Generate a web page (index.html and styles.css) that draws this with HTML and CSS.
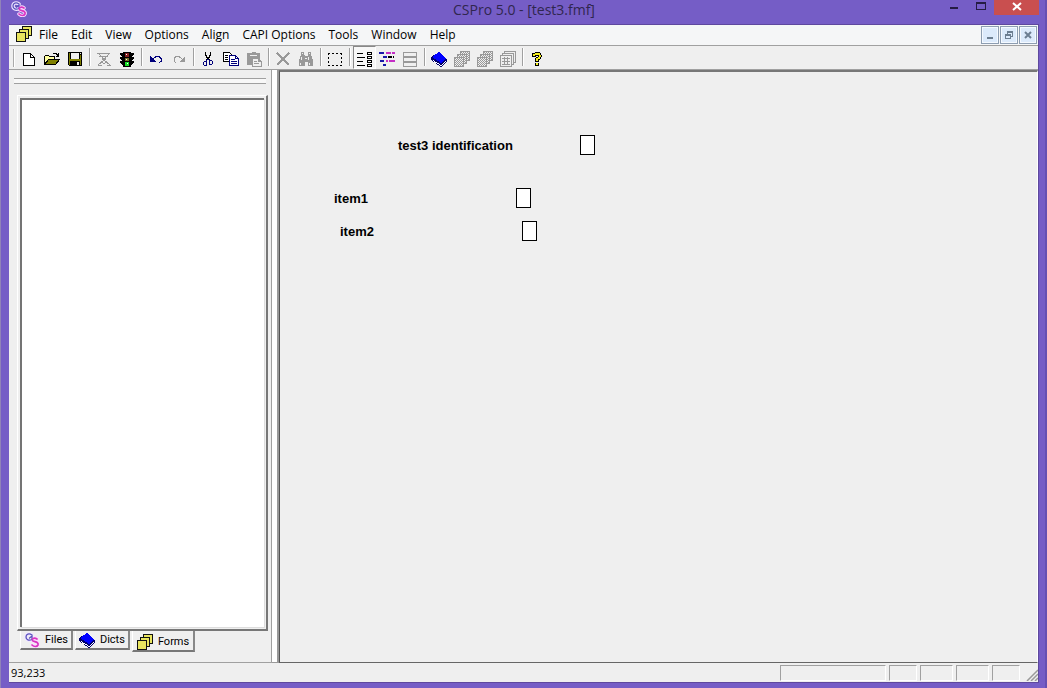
FILE: index.html
```html
<!DOCTYPE html>
<html lang="en">
<head>
<meta charset="utf-8">
<title>CSPro 5.0 - [test3.fmf]</title>
<link rel="stylesheet" href="styles.css">
</head>
<body>
<svg class="defs" aria-hidden="true">
  <defs>
    <pattern id="dots" width="2" height="2" patternUnits="userSpaceOnUse"><path fill="#efefef" d="M0 0h2v2H0z"/><path fill="#999" d="M0 0h1v1H0zM1 1h1v1H1z"/></pattern>
    <symbol id="logo" viewBox="0 0 16 16"><g fill="none" stroke-linecap="round" shape-rendering="geometricPrecision"><path d="M8 3C5 1 2 2 2 5s3 4 6 2.500" stroke="#f0e6ff" stroke-width="3.500"/><path d="M13 7c-3-2-6 0-4 2 2 1 6 1 5 4-1 2-4 2-6 0" stroke="#fbdcff" stroke-width="3.500"/><path d="M8 3C5 1 2 2 2 5s3 4 6 2.500V4L5.500 6" stroke="#5952bd" stroke-width="1.300"/><path d="M13 7c-3-2-6 0-4 2 2 1 6 1 5 4-1 2-4 2-6 0" stroke="#d935c2" stroke-width="1.700"/></g></symbol>
    <symbol id="forms" viewBox="0 0 16 16"><g fill="#e9e55f" stroke="#111"><path d="M6.500.5h9v9h-9zM3.500 3.500h9v9h-9zM.5 6.500h9v9h-9z"/></g></symbol>
    <symbol id="stack" viewBox="0 0 16 16"><g fill="url(#dots)" stroke="#999"><path d="M6.500.5h9v9h-9z"/><path d="M3.500 3.500h9v9h-9z"/><path d="M.5 6.500h9v9h-9z"/></g></symbol>
    <symbol id="book" viewBox="0 0 16 16"><path fill="#00006b" d="M0 6 8 1l8 7v3l-6 5-10-7z"/><path fill="#fff" d="m2 9 8 5 5-5v2l-5 4-8-5z"/><path fill="#00f" d="M1 6 8 1l7 7-5 4z"/></symbol>
  </defs>
</svg>
<div class="window">
  <header class="titlebar">
    <svg class="app-icon"><use href="#logo"/></svg>
    <h1 class="title">CSPro 5.0 - [test3.fmf]</h1>
    <div class="caption-buttons">
      <button class="caption" aria-label="Minimize"><svg viewBox="0 0 10 10"><path fill="#251c43" d="M1 6h8v2H1z"/></svg></button>
      <button class="caption" aria-label="Maximize"><svg viewBox="0 0 10 10"><path fill="#251c43" fill-rule="evenodd" d="M0 1h10v8H0zM1 3h8v5H1z"/></svg></button>
      <button class="caption caption-close" aria-label="Close"><svg viewBox="0 0 10 10"><path stroke="#fff" stroke-width="2" d="m1 2 8 7M9 2 1 9"/></svg></button>
    </div>
  </header>
  <div class="client">
    <nav class="menubar">
      <svg class="icon doc-icon" viewBox="0 0 16 16"><g fill="#e9e55f" stroke="#111"><path d="M6.500.5h9v9h-9z"/><path d="M3.500 3.500h9v9h-9z"/><path d="M.5 6.500h9v9h-9z"/></g></svg>
      <button class="menu">File</button><button class="menu">Edit</button><button class="menu">View</button><button class="menu">Options</button><button class="menu">Align</button><button class="menu">CAPI Options</button><button class="menu">Tools</button><button class="menu">Window</button><button class="menu">Help</button>
      <div class="mdi-buttons">
        <button class="mdi" aria-label="Minimize form"><svg viewBox="0 0 8 8"><path fill="#6d7f92" d="M1 6h6v2H1z"/></svg></button>
        <button class="mdi" aria-label="Restore form"><svg viewBox="0 0 8 8"><path fill="#6d7f92" fill-rule="evenodd" d="M2 0h6v6H6v2H0V3h2zM3 2v1h3v2h1V2zM1 5v2h4V5z"/></svg></button>
        <button class="mdi" aria-label="Close form"><svg viewBox="0 0 8 8"><path stroke="#6d7f92" stroke-width="2" d="m1 1 6 6M7 1 1 7"/></svg></button>
      </div>
    </nav>
    <div class="toolbar" role="toolbar" aria-label="Standard">
      <span class="handle"></span>
      <button class="tool" aria-label="New"><svg class="icon" viewBox="0 0 16 16"><path fill="#fff" stroke="#000" d="M2.500 2.500h7l4 4v8h-11z"/><path fill="none" stroke="#000" d="M9.500 2.500v4h4"/></svg></button>
      <button class="tool" aria-label="Open"><svg class="icon" viewBox="0 0 16 16"><path fill="#ffffa0" stroke="#000" d="M.5 13.500v-8l1-1h3l1 1h5v3h-6z"/><path fill="#808000" stroke="#000" d="m.5 13.500 4-5h11l-4 5z"/><path fill="none" stroke="#000" d="M9 2.500h3l2 2M14.500 2v3h-3"/></svg></button>
      <button class="tool" aria-label="Save"><svg class="icon" viewBox="0 0 16 16"><path d="M1 1h14v14H2l-1-1z"/><path fill="#808000" d="M2 2h1v12H2zM13 4h1v10h-1zM3 8h10v2H3z"/><path fill="#efefef" d="M4 2h8v6H4zM13 2h1v1h-1zM10 11h2v3h-2z"/></svg></button>
      <span class="sep"></span>
      <button class="tool" aria-label="Compile" disabled><svg class="icon" viewBox="0 0 16 16"><g fill="none" stroke="#999"><path d="M1 2.500h13M3 5.500h9M3 3l4 4M13 3 9 7M6 7h4L8 10zM8 9l-6 5M8 9l6 5M2 14.500h4M11 14.500h4M5 10l2 2h2l2-2"/></g></svg></button>
      <button class="tool" aria-label="Run"><svg class="icon" viewBox="0 0 16 16"><path d="M4 1h8v1h3v2l-3 2h3v2l-3 2h3v2l-3 2v2H4v-2l-3-2v-2h3L1 8V6h3L1 4V2h3z"/><path fill="#842020" d="M6 2h4v4H6z"/><path fill="#77702b" d="M6 7h4v3H6z"/><path fill="#19df29" d="M6 11h4v4H6z"/><path fill="#fff" d="M7 3h1v1H7zM7 8h1v1H7zM8 12h1v1H8z"/></svg></button>
      <span class="sep"></span>
      <button class="tool" aria-label="Undo"><svg class="icon" viewBox="0 0 16 16"><path fill="#00007b" d="M2 5v6h6z"/><path fill="none" stroke="#00007b" d="M4.500 8.500 8 5.500h3l2 2v3l-2 1"/></svg></button>
      <button class="tool" aria-label="Redo" disabled><svg class="icon" viewBox="0 0 16 16"><path fill="#999" d="M14 5v6H8z"/><path fill="none" stroke="#999" d="M11.500 8.500 8 5.500H5l-2 2v3l2 1"/></svg></button>
      <span class="sep"></span>
      <button class="tool" aria-label="Cut"><svg class="icon" viewBox="0 0 16 16"><path fill="none" stroke="#000" stroke-width="1.500" d="M5.500 1v3L9 9M10.500 1v3L7 9"/><path fill="none" stroke="#00007b" d="m8 8-2 2M8 8l2 2M4.500 10.500h2v4h-2l-1-1v-2zM9.500 9.500h2l1 1v2l-1 1h-2z"/></svg></button>
      <button class="tool" aria-label="Copy"><svg class="icon" viewBox="0 0 16 16"><path fill="#fff" stroke="#000" d="M.5 1.500h6l2 2v7h-8z"/><path stroke="#000" d="M2 4.500h3M2 6.500h3M2 8.500h3"/><path fill="#fff" stroke="#00007b" d="M6.500 4.500h6l3 3v7h-9z"/><path stroke="#00007b" fill="none" d="M8 8.500h4M8 10.500h6M8 12.500h6M12.500 5v2.500H15"/></svg></button>
      <button class="tool" aria-label="Paste" disabled><svg class="icon" viewBox="0 0 16 16"><path fill="#999" d="M1 2h4l1-1h3l1 1h4v12H1z"/><path fill="#efefef" stroke="#999" d="M6.500 7.500h6l3 3v5h-9zM12.500 8v2.500H15"/><path stroke="#999" d="M8 10.500h3M8 12.500h5"/><path stroke="#efefef" d="M4 4.500h7"/></svg></button>
      <span class="sep"></span>
      <button class="tool" aria-label="Delete" disabled><svg class="icon" viewBox="0 0 16 16"><path stroke="#999" stroke-width="2" d="m2 2 12 12M14 2 2 14"/></svg></button>
      <button class="tool" aria-label="Find" disabled><svg class="icon" viewBox="0 0 16 16"><path fill="#999" d="M3 1h3v3l1 1h2l1-1V1h3v3l1 2 1 4v5h-5v-4H7v4H1v-5l1-4 1-2z"/><path fill="#efefef" d="M4 2h1v1H4zM11 2h1v1h-1zM3 6h1v3H3zM7 7h2v1H7zM10 6h1v3h-1zM2 12h1v2H2zM11 12h1v2h-1z"/></svg></button>
      <span class="sep"></span>
      <button class="tool" aria-label="Select area"><svg class="icon" viewBox="0 0 16 16"><path fill="none" stroke="#000" stroke-dasharray="2 2" d="M1 2.500h14M1 14.500h14M1.500 2v13M14.500 2v13"/></svg></button>
      <span class="sep"></span>
      <button class="tool tool-pressed" aria-label="Form layout" aria-pressed="true"><svg class="icon" viewBox="0 0 16 16"><path fill="none" stroke="#000" d="M1 2.500h6M1 6.500h8M1 10.500h6M1 14.500h8M11.500 1.500h4v2h-4zM11.500 5.500h4v2h-4zM11.500 9.500h4v2h-4zM11.500 13.500h4v2h-4z"/></svg></button>
      <button class="tool" aria-label="Question text"><svg class="icon" viewBox="0 0 16 16"><path fill="#1717a8" d="M0 1h5v2H0zM4 5h4v2H4zM1 9h4v2H1zM4 13h3v2H4z"/><path fill="#c32dc5" d="M7 1h5v2H7zM13 1h3v2h-3zM7 9h2v2H7zM10 9h6v2h-6z"/><path d="M9 5h4v2H9zM14 5h1v2h-1z"/></svg></button>
      <button class="tool" aria-label="Rows" disabled><svg class="icon" viewBox="0 0 16 16"><path fill="none" stroke="#999" d="M1.500 1.500h13v14h-13zM1 5.500h14M1 6.500h14M1 10.500h14M1 11.500h14"/></svg></button>
      <span class="sep"></span>
      <button class="tool" aria-label="Dictionary"><svg class="icon"><use href="#book"/></svg></button>
      <button class="tool" aria-label="Add form" disabled><svg class="icon"><use href="#stack"/></svg></button>
      <button class="tool" aria-label="Add level" disabled><svg class="icon"><use href="#stack"/></svg></button>
      <button class="tool" aria-label="Add roster" disabled><svg class="icon" viewBox="0 0 16 16"><g fill="#efefef" stroke="#999"><path d="M4.500.5h11v11h-11z"/><path d="M2.500 2.500h11v11h-11z"/><path d="M.5 4.500h11v11H.5zM2 7.500h8M2 10.500h8M2 13.500h8M4.500 6v8M7.500 6v8"/></g></svg></button>
      <span class="sep"></span>
      <button class="tool" aria-label="Help"><svg class="icon" viewBox="0 0 16 16"><path fill="none" stroke="#000" stroke-width="4" d="M5 6V4l2-1h3l1 2-1 2-2 1v3M8 12v3"/><path fill="none" stroke="#f4ee20" stroke-width="2" d="M5 5V4l2-1h3l1 2-1 2-2 1v2M8 12v2"/></svg></button>
    </div>
    <main class="workspace">
      <aside class="sidebar">
        <div class="gripper"></div>
        <section class="tree-frame"><div class="tree"></div></section>
        <div class="tabs" role="tablist">
          <button class="tab" role="tab"><svg class="icon"><use href="#logo"/></svg>Files</button>
          <button class="tab" role="tab"><svg class="icon"><use href="#book"/></svg>Dicts</button>
          <button class="tab tab-active" role="tab" aria-selected="true"><svg class="icon" viewBox="0 0 16 16"><g fill="#e9e55f" stroke="#111"><path d="M6.500.5h9v9h-9z"/><path d="M3.500 3.500h9v9h-9z"/><path d="M.5 6.500h9v9h-9z"/></g></svg>Forms</button>
        </div>
      </aside>
      <div class="splitter"></div>
      <section class="canvas">
        <label class="node label-id" for="id">test3 identification</label><input class="node box-id" id="id">
        <label class="node label-one" for="item1">item1</label><input class="node box-one" id="item1">
        <label class="node label-two" for="item2">item2</label><input class="node box-two" id="item2">
      </section>
    </main>
    <footer class="status">
      <span class="status-text">93,233</span>
      <span class="pane pane-wide"></span><span class="pane pane-small"></span><span class="pane"></span><span class="pane"></span><span class="pane pane-small"></span>
      <svg class="size-grip" viewBox="0 0 12 12"><path stroke="#999" stroke-width="1.500" d="M1 12 12 1M5 12l7-7M9 12l3-3"/></svg>
    </footer>
  </div>
</div>
</body>
</html>
```
FILE: styles.css
```css
* { box-sizing: border-box; }
body { margin: 0; color: #000; font: 12px/16px "Open Sans", "Noto Sans", sans-serif; }
button { margin: 0; padding: 0; border: 0; background: none; color: inherit; font: inherit; }
svg { display: block; }
.defs { position: absolute; width: 0; height: 0; }
.window { display: flex; flex-direction: column; height: 100vh; padding: 0 8px 5px 8px; background: #755dc6; border-left: 1px solid #9083b8; box-shadow: inset -2px 0 #6650b2; }
.titlebar { display: grid; grid-template-columns: 1fr auto 1fr; height: 24px; }
.app-icon { width: 16px; height: 16px; margin: 1px 0 0 2px; }
.title { margin: 0; color: #30264e; font-size: 14px; font-weight: 400; line-height: 20px; }
.caption-buttons { display: flex; justify-content: flex-end; }
.caption { display: grid; place-items: center; width: 27px; height: 11px; }
.caption svg { width: 10px; height: 10px; }
.caption-close { width: 45px; height: 15px; background: #c94f4f; padding-bottom: 3px; }
.client { display: flex; flex: 1; flex-direction: column; min-height: 0; border-top: 1px solid #5e489e; border-right: 1px solid #5e489e; border-bottom: 1px solid #5e489e; background: #efefef; }
.menubar { display: flex; align-items: flex-start; height: 21px; padding: 1px 1px 0 7px; background: #f5f6f7; border-bottom: 1px solid #a0a0a0; }
.icon { width: 16px; height: 16px; shape-rendering: crispEdges; flex: none; }
.menu { padding: 1px 6px 0 7px; }
.mdi-buttons { display: flex; gap: 1px; margin-left: auto; }
.mdi { display: grid; place-items: center; width: 18px; height: 18px; border: 1px solid #8d9db1; background: #dceafb; box-shadow: inset 0 0 0 1px #f4f9ff; }
.mdi svg { width: 8px; height: 8px; }
.toolbar { display: flex; align-items: flex-start; height: 23px; padding-left: 4px; }
.handle { width: 2px; height: 18px; margin: 3px 3px 0 0; border-left: 1px solid #aaa; background: #fff; }
.tool { width: 23px; height: 23px; padding: 3px 0 0 3px; }
.tool-pressed { padding: 2px 0 0 2px; border: 1px solid #fff; border-top-color: #888; border-left-color: #888; background: #f7f7f7; }
.sep { width: 2px; height: 18px; margin: 2px 2px 0; border-left: 1px solid #a0a0a0; background: #fff; }
.workspace { display: flex; flex: 1; min-height: 0; border-top: 1px solid #a0a0a0; }
.sidebar { display: flex; flex-direction: column; width: 263px; border-bottom: 1px solid #a0a0a0; border-right: 1px solid #a0a0a0; padding: 8px 3px 10px 5px; }
.gripper { height: 6px; margin-right: 2px; border-top: 1px solid #a0a0a0; border-bottom: 1px solid #a0a0a0; background: #f8f8f8; }
.tree-frame { display: flex; flex: 1; margin: 11px 0 0 3px; padding: 2px; border: 1px solid #fff; border-right: 2px solid #777; border-bottom: 2px solid #777; }
.tree { flex: 1; border-top: 2px solid #747474; border-left: 2px solid #747474; background: #fff; box-shadow: 1px 1px #ddd; }
.tabs { display: flex; align-items: flex-start; gap: 2px; height: 21px; margin-left: 6px; font: 11px/16px Roboto, sans-serif; }
.tab { display: flex; align-items: center; height: 19px; padding: 1px 3px 0 3px; gap: 5px; border-left: 1px solid #fff; border-right: 2px solid #888; border-bottom: 2px solid #777; white-space: nowrap; }
.tab-active { height: 21px; padding: 2px 4px 0 4px; }
.splitter { width: 7px; background: linear-gradient(90deg, #fff 5px, #999 5px); border-bottom: 1px solid #999; }
.canvas { position: relative; flex: 1; border-top: 2px solid #777; border-left: 1px solid #555; border-bottom: 1px solid #666; border-right: 1px solid #fff; }
.node { position: absolute; font: bold 13px/16px "Liberation Sans", Arial, sans-serif; white-space: nowrap; }
input.node { width: 15px; height: 20px; padding: 0; border: 1px solid #000; border-radius: 0; background: #fff; }
.label-id { left: 118px; top: 66px; }
.box-id { left: 300px; top: 63px; }
.label-one { left: 54px; top: 119px; }
.box-one { left: 236px; top: 116px; }
.label-two { left: 60px; top: 152px; }
.box-two { left: 242px; top: 149px; }
.status { display: flex; gap: 3px; height: 19px; padding: 2px 0 1px 2px; }
.status-text { flex: 1; font-size: 11px; }
.pane { width: 33px; border: 1px solid #fff; border-top-color: #a0a0a0; border-left-color: #a0a0a0; }
.pane-small { width: 28px; }
.pane-wide { width: 106px; }
.size-grip { width: 12px; height: 12px; margin-left: 3px; align-self: flex-end; }
```
